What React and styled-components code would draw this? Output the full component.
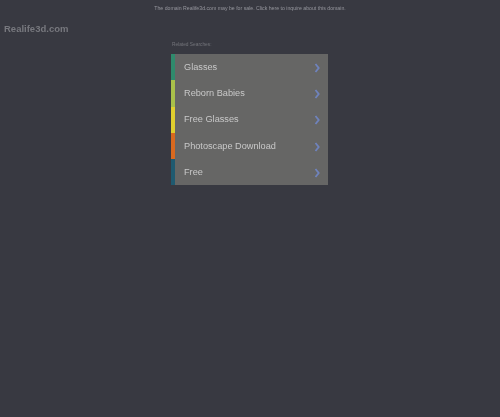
import React from 'react'
import styled, { createGlobalStyle } from 'styled-components'

const links = [
  { label: 'Glasses', color: '#2f8a6c' },
  { label: 'Reborn Babies', color: '#a9c04a' },
  { label: 'Free Glasses', color: '#e0cf2e' },
  { label: 'Photoscape Download', color: '#d9691f' },
  { label: 'Free', color: '#1f5a70' },
]

const GlobalStyle = createGlobalStyle`
  html, body {
    margin: 0;
    height: 100%;
    background: #383941;
    overflow: hidden;
  }
  body {
    font-family: "Liberation Sans", Arial, sans-serif;
  }
`

const Page = styled.div`
  width: 500px;
  height: 417px;
  background: #383941;
  display: flex;
  flex-direction: column;
`

const Notice = styled.div`
  height: 15px;
  padding-top: 5px;
  box-sizing: border-box;
  text-align: center;
  font-size: 5.2px;
  line-height: 7px;
  color: #96979e;
  filter: blur(0.5px);
`

const Logo = styled.div`
  padding: 7px 0 0 4px;
  height: 22px;
  box-sizing: border-box;
  font-size: 9.5px;
  line-height: 14px;
  font-weight: bold;
  color: #77787e;
  filter: blur(0.6px);
`

const Main = styled.div`
  width: 157px;
  margin-left: 171px;
  filter: blur(0.6px);
`

const Caption = styled.div`
  height: 17px;
  padding: 5px 0 0 1px;
  box-sizing: border-box;
  font-size: 4.8px;
  line-height: 6px;
  color: #74757b;
`

const List = styled.ul`
  list-style: none;
  margin: 0;
  padding: 0;
  background: #666665;
`

const Row = styled.li`
  height: 26.3px;
  display: flex;
  align-items: center;
  justify-content: space-between;
  box-sizing: border-box;
  padding: 0 8px 1px 9px;
  border-left: 4px solid ${props => props.$color};
  font-size: 9.2px;
  color: #c9c9c9;
`

const Arrow = styled.svg`
  width: 6px;
  height: 10px;
  fill: none;
  stroke: #6f83bd;
  stroke-width: 1.8;
  margin-top: 2px;
`

const App = () => {
  return (
    <Page>
      <GlobalStyle />
      <Notice>The domain Realife3d.com may be for sale. Click here to inquire about this domain.</Notice>
      <Logo>Realife3d.com</Logo>
      <Main>
        <Caption>Related Searches:</Caption>
        <List>
          {links.map(link => (
            <Row key={link.label} $color={link.color}>
              {link.label}
              <Arrow viewBox="0 0 6 10">
                <path d="M1.5 1l3.2 4-3.2 4" />
              </Arrow>
            </Row>
          ))}
        </List>
      </Main>
    </Page>
  )
}

export default App
